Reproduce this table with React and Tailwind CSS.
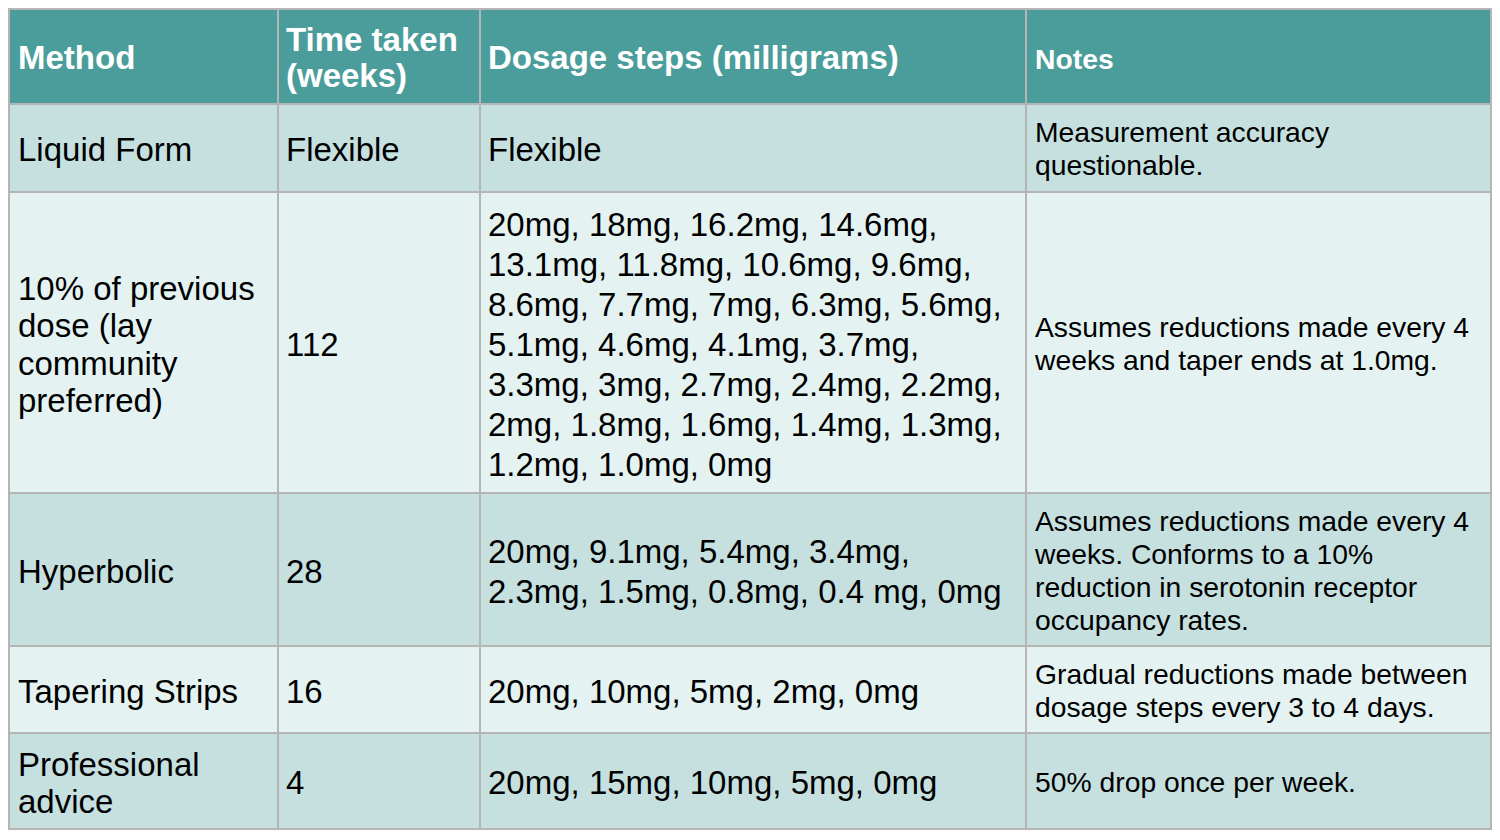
const rows = [
  {
    method: ["Liquid Form"],
    time: "Flexible",
    dosage: ["Flexible"],
    notes: ["Measurement accuracy", "questionable."],
    h: "h-[88px]",
  },
  {
    method: ["10% of previous", "dose (lay", "community", "preferred)"],
    time: "112",
    dosage: [
      "20mg, 18mg, 16.2mg, 14.6mg,",
      "13.1mg, 11.8mg, 10.6mg, 9.6mg,",
      "8.6mg, 7.7mg, 7mg, 6.3mg, 5.6mg,",
      "5.1mg, 4.6mg, 4.1mg, 3.7mg,",
      "3.3mg, 3mg, 2.7mg, 2.4mg, 2.2mg,",
      "2mg, 1.8mg, 1.6mg, 1.4mg, 1.3mg,",
      "1.2mg, 1.0mg, 0mg",
    ],
    notes: ["Assumes reductions made every 4", "weeks and taper ends at 1.0mg."],
    h: "h-[301px]",
  },
  {
    method: ["Hyperbolic"],
    time: "28",
    dosage: ["20mg, 9.1mg, 5.4mg, 3.4mg,", "2.3mg, 1.5mg, 0.8mg, 0.4 mg, 0mg"],
    notes: [
      "Assumes reductions made every 4",
      "weeks. Conforms to a 10%",
      "reduction in serotonin receptor",
      "occupancy rates.",
    ],
    h: "h-[153px]",
  },
  {
    method: ["Tapering Strips"],
    time: "16",
    dosage: ["20mg, 10mg, 5mg, 2mg, 0mg"],
    notes: ["Gradual reductions made between", "dosage steps every 3 to 4 days."],
    h: "h-[87px]",
  },
  {
    method: ["Professional", "advice"],
    time: "4",
    dosage: ["20mg, 15mg, 10mg, 5mg, 0mg"],
    notes: ["50% drop once per week."],
    h: "h-[96px]",
  },
];

const Lines = ({ lines }) =>
  lines.map((l, i) => (
    <span key={i} className="block whitespace-nowrap">
      {l}
    </span>
  ));

export default function App() {
  return (
    <div
      className="w-[1500px] h-[840px] bg-white pl-[8px] pt-[8px]"
      style={{ fontFamily: '"Liberation Sans", Arial, sans-serif' }}
    >
      <table className="border-collapse text-black table-fixed w-[1482px]">
        <colgroup>
          <col className="w-[269px]" />
          <col className="w-[202px]" />
          <col className="w-[546px]" />
          <col className="w-[465px]" />
        </colgroup>
        <thead>
          <tr className="bg-[#4a9d9a] text-white font-bold h-[95px]">
            <th className="border-2 border-[#b5b5b5] text-left align-middle pl-[8px] pt-[2px] text-[33px] leading-[36px]">
              Method
            </th>
            <th className="border-2 border-[#b5b5b5] text-left align-middle pl-[7px] pt-[2px] text-[33px] leading-[36px]">
              <span className="block">Time taken</span>
              <span className="block">(weeks)</span>
            </th>
            <th className="border-2 border-[#b5b5b5] text-left align-middle pl-[7px] pt-[2px] text-[33px] leading-[36px]">
              Dosage steps (milligrams)
            </th>
            <th className="border-2 border-[#b5b5b5] text-left align-middle pl-[8px] pt-[6px] text-[28.3px] leading-[33px]">
              Notes
            </th>
          </tr>
        </thead>
        <tbody>
          {rows.map((r, i) => (
            <tr
              key={i}
              className={`${r.h} ${i % 2 === 0 ? "bg-[#c6e0e0]" : "bg-[#e4f3f2]"}`}
            >
              <td className="border-2 border-[#b5b5b5] align-middle pl-[8px] pt-[4px] text-[33px] leading-[37.5px]">
                <Lines lines={r.method} />
              </td>
              <td className="border-2 border-[#b5b5b5] align-middle pl-[7px] pt-[4px] text-[33px] leading-[37.5px]">
                {r.time}
              </td>
              <td className="border-2 border-[#b5b5b5] align-middle pl-[7px] pt-[4px] text-[33px] leading-[40px]">
                <Lines lines={r.dosage} />
              </td>
              <td className="border-2 border-[#b5b5b5] align-middle pl-[8px] pt-[2px] text-[28.3px] leading-[33px]">
                <Lines lines={r.notes} />
              </td>
            </tr>
          ))}
        </tbody>
      </table>
    </div>
  );
}
